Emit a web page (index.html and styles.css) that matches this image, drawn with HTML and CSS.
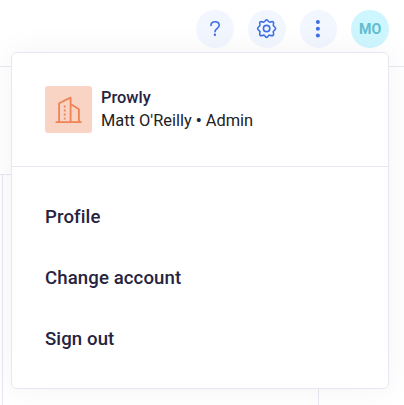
FILE: index.html
```html
<!DOCTYPE html>
<html lang="en">
<head>
    <meta charset="UTF-8">
    <title>Account</title>
    <link rel="stylesheet" href="styles.css">
</head>
<body>
    <header class="topbar">
        <button class="circle-button" aria-label="Help">
            <svg width="38" height="38" viewBox="0 0 38 38">
                <path d="M15 15.4C15 12.9 16.8 11.7 19 11.7S23.2 13 23.2 15.2C23.2 18.2 19 18.4 19 21.8" />
                <circle class="dot" cx="18.9" cy="24.8" r="1.2" />
            </svg>
        </button>
        <button class="circle-button" aria-label="Settings">
            <svg width="38" height="38" viewBox="0 0 38 38">
                <path d="M16.8 11.4 Q18.6 8.4 20.4 11.4 Q21.2 12.5 22.5 11.9 Q26.4 10.8 25.4 14.3 Q24.8 15.6 26 16.4 Q29.2 18.6 26 20.7 Q24.8 21.4 25.4 22.8 Q26.4 26.5 22.5 25.4 Q21.2 24.8 20.4 25.9 Q18.6 28.9 16.8 25.9 Q16 24.8 14.7 25.4 Q10.9 26.5 11.9 22.8 Q12.4 21.4 11.2 20.7 Q8 18.6 11.2 16.4 Q12.4 15.6 11.9 14.3 Q10.9 10.8 14.7 11.9 Q16 12.5 16.8 11.4Z" />
                <circle cx="18.6" cy="18.6" r="3.2" />
            </svg>
        </button>
        <button class="circle-button" aria-label="More">
            <svg width="38" height="38" viewBox="0 0 38 38">
                <circle class="dot" cx="18.9" cy="12.1" r="2" />
                <circle class="dot" cx="18.9" cy="18.8" r="2" />
                <circle class="dot" cx="18.9" cy="25.6" r="2" />
            </svg>
        </button>
        <button class="circle-button avatar">MO</button>
    </header>

    <main class="page">
        <div class="page-heading"></div>
        <div class="page-panel"></div>
    </main>

    <div class="account-menu">
        <div class="account-info">
            <div class="company-logo">
                <svg width="28" height="28" viewBox="0 0 28 28">
                    <path d="M.6 26.2H26.6M4.1 26.2V7.3L15.6 1.6V26.2M15.6 8L23.9 13.2V26.2" />
                    <path class="windows" d="M9.7 9.4V23.6" />
                </svg>
            </div>
            <div class="account-text">
                <div class="company-name">Prowly</div>
                <div class="user-name">Matt O'Reilly <span class="bullet">•</span> Admin</div>
            </div>
        </div>
        <nav class="menu-links">
            <a class="menu-link">Profile</a>
            <a class="menu-link">Change account</a>
            <a class="menu-link">Sign out</a>
        </nav>
    </div>
</body>
</html>
```
FILE: styles.css
```css
* {
    box-sizing: border-box;
}

body {
    margin: 0;
    height: 405px;
    overflow: hidden;
    display: flex;
    flex-direction: column;
    position: relative;
    background-color: #fff;
    font-family: Roboto, Arial, sans-serif;
    color: #26233f;
}

.topbar {
    display: flex;
    justify-content: flex-end;
    gap: 14px;
    height: 67px;
    padding: 10px 15px 0 0;
    border-bottom: 1px solid #e8e7f1;
}

.circle-button {
    display: flex;
    align-items: center;
    justify-content: center;
    width: 37.7px;
    height: 37.7px;
    padding: 0;
    border: none;
    border-radius: 50%;
    background-color: #f2f6ff;
}

.circle-button svg {
    flex: none;
    fill: none;
    stroke: #3c6ee6;
    stroke-width: 1.6;
    stroke-linecap: round;
    stroke-linejoin: round;
}

.circle-button .dot {
    fill: #3c6ee6;
    stroke: none;
}

.avatar {
    background-color: #cdf6ff;
    color: #62bdd0;
    font-family: Roboto, sans-serif;
    font-size: 14.2px;
    font-weight: 700;
}

.page {
    flex: 1;
    display: flex;
    flex-direction: column;
}

.page-heading {
    width: 319px;
    height: 108px;
    border-bottom: 1px solid #e8e7f1;
}

.page-panel {
    flex: 1;
    width: 317px;
    margin-left: 2px;
    border: 1px solid #e8e7f1;
    border-width: 0 1px;
}

/* dropdown */
.account-menu {
    position: absolute;
    top: 52px;
    left: 11px;
    width: 378px;
    height: 337px;
    border: 1px solid #e8e7f1;
    border-radius: 6px;
    background-color: #fff;
    box-shadow: 0 0 32px rgba(38, 35, 63, 0.05);
}

.account-info {
    display: flex;
    gap: 9px;
    height: 114px;
    padding: 33px 33px 0;
    border-bottom: 1px solid #e8e7f1;
}

.company-logo {
    display: flex;
    align-items: center;
    justify-content: center;
    width: 47px;
    height: 47px;
    border-radius: 3px;
    background-color: #f9d3c4;
}

.company-logo svg {
    fill: none;
    stroke: #ef8354;
    stroke-width: 1.8;
    stroke-linejoin: round;
}

.company-logo .windows {
    stroke-dasharray: 2 2.1;
}

.account-text {
    font-size: 16.4px;
    line-height: 23px;
}

.company-name {
    font-weight: 500;
}

.user-name {
    color: #222;
}

.bullet {
    font-weight: 700;
    color: #26233f;
}

.menu-links {
    display: flex;
    flex-direction: column;
    padding: 20px 33px;
}

.menu-link {
    font-size: 18.6px;
    font-weight: 500;
    line-height: 61px;
    letter-spacing: 0.1px;
}
```
